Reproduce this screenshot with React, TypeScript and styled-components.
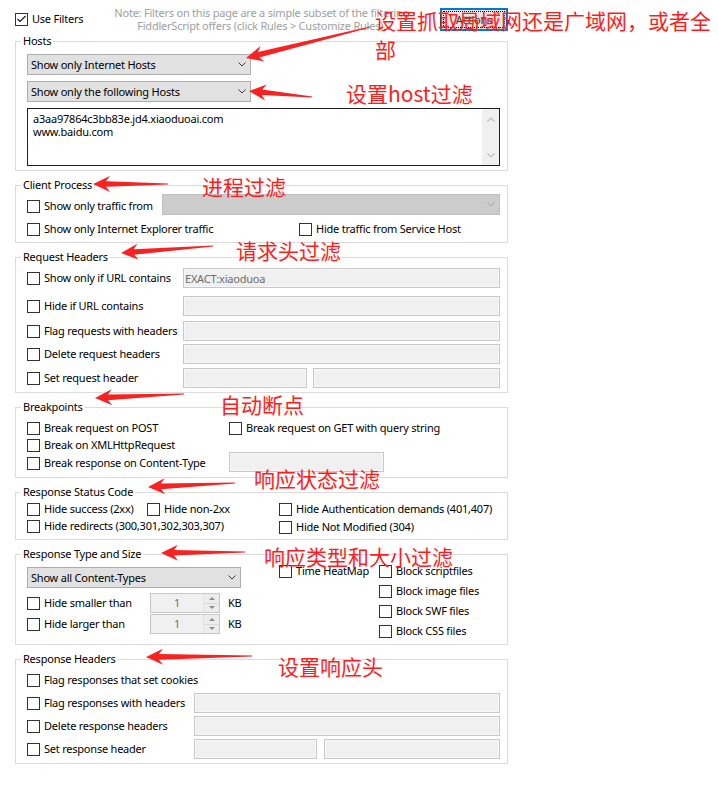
import React from "react";
import styled, { createGlobalStyle } from "styled-components";

const GlobalStyle = createGlobalStyle`
  html, body { margin: 0; padding: 0; background: #ffffff; }
  body { font-family: "Noto Sans", "Liberation Sans", sans-serif; font-size: 11px; color: #000; }
`;

const Page = styled.div`
  position: relative;
  width: 718px;
  height: 785px;
  box-sizing: border-box;
  padding: 8px 0 0 15px;
  overflow: hidden;
  font-family: "Noto Sans", "Liberation Sans", sans-serif;
  font-size: 11px;
  letter-spacing: -0.22px;
  line-height: 13px;
  color: #000;
`;

const TopBar = styled.div`
  width: 493px;
  height: 22px;
  display: flex;
  align-items: center;
  margin-bottom: 11px;
`;

const Hint = styled.div`
  flex: 1;
  align-self: flex-start;
  margin-top: -2px;
  text-align: center;
  white-space: nowrap;
  color: #a0a0a0;
  line-height: 13px;
`;

const ActionButton = styled.div`
  width: 68px;
  height: 23px;
  box-sizing: border-box;
  border: 1px solid #0078d7;
  box-shadow: inset 0 0 0 1px #0078d7;
  background: #e5e5e5;
  padding: 2px;
  display: flex;
`;

const FocusRing = styled.div`
  flex: 1;
  border: 1px dotted #000;
  display: flex;
  align-items: center;
  justify-content: center;
  color: #333;
`;

const Groups = styled.div`
  display: flex;
  flex-direction: column;
  gap: 14px;
`;

const Group = styled.section`
  width: 493px;
  box-sizing: border-box;
  border: 1px solid #dcdcdc;
`;

const Legend = styled.div`
  width: fit-content;
  height: 14px;
  margin: -8px 0 0 5px;
  padding: 0 2px;
  line-height: 14px;
  background: #fff;
  white-space: nowrap;
`;

const Body = styled.div<{ $pt: number; $pb: number; $gap?: number }>`
  padding: ${(p) => p.$pt}px 7px ${(p) => p.$pb}px 11px;
  display: flex;
  flex-direction: column;
  gap: ${(p) => p.$gap ?? 0}px;
`;

const CheckLabel = styled.label<{ $shift?: number }>`
  display: inline-flex;
  align-items: center;
  gap: 4px;
  white-space: nowrap;
  margin-top: ${(p) => p.$shift ?? 0}px;
`;

const CheckText = styled.span`
  padding-bottom: 2px;
`;

const Box = styled.span`
  flex: none;
  width: 13px;
  height: 13px;
  box-sizing: border-box;
  border: 1px solid #333;
  background: #fff;
  display: inline-flex;
  align-items: center;
  justify-content: center;
`;

const Combo = styled.div<{ $w?: number; $disabled?: boolean }>`
  ${(p) => (p.$w ? `width: ${p.$w}px; flex: none;` : "flex: 1;")}
  height: 21px;
  box-sizing: border-box;
  border: 1px solid ${(p) => (p.$disabled ? "#bfbfbf" : "#adadad")};
  background: ${(p) => (p.$disabled ? "#cccccc" : "#e1e1e1")};
  display: flex;
  align-items: center;
  justify-content: space-between;
  padding: 0 4px 0 3px;
  white-space: nowrap;
`;

const Field = styled.div<{ $w?: number }>`
  ${(p) => (p.$w ? `width: ${p.$w}px; flex: none;` : "flex: 1;")}
  height: 20px;
  box-sizing: border-box;
  border: 1px solid #c8c8c8;
  box-shadow: inset 0 0 0 1px #f7f7f7;
  background: #f0f0f0;
  color: #6d6d6d;
  padding-left: 1px;
  display: flex;
  align-items: center;
  white-space: nowrap;
`;

const FieldPair = styled.div<{ $gap: number }>`
  display: flex;
  gap: ${(p) => p.$gap}px;
`;

const FieldRow = styled.div<{ $label: number; $h?: number; $mt?: number }>`
  display: grid;
  grid-template-columns: ${(p) => p.$label}px 1fr;
  align-items: center;
  height: ${(p) => p.$h ?? 20}px;
  margin-top: ${(p) => p.$mt ?? 0}px;
`;

const PlainRow = styled.div<{ $h: number; $mt?: number }>`
  display: flex;
  align-items: center;
  height: ${(p) => p.$h}px;
  margin-top: ${(p) => p.$mt ?? 0}px;
`;

const Grid = styled.div<{ $cols: string; $rows: string }>`
  display: grid;
  grid-template-columns: ${(p) => p.$cols};
  grid-template-rows: ${(p) => p.$rows};
  align-items: center;
`;

const Span = styled.div<{ $col: string; $row?: string; $end?: boolean }>`
  grid-column: ${(p) => p.$col};
  grid-row: ${(p) => p.$row ?? "auto"};
  ${(p) => (p.$end ? "align-self: end; margin-bottom: 1px;" : "")}
`;

const HostList = styled.div`
  height: 58px;
  box-sizing: border-box;
  border: 1px solid #1e1e1e;
  background: #fff;
  display: flex;
`;

const HostText = styled.div`
  flex: 1;
  padding: 3px 5px;
  line-height: 13px;
  white-space: pre;
`;

const ScrollTrack = styled.div`
  width: 17px;
  background: #f0f0f0;
  display: flex;
  flex-direction: column;
  justify-content: space-between;
  align-items: center;
  padding: 8px 0 7px;
`;

const TypeBody = styled.div`
  padding: 0 7px 3px 11px;
  display: flex;
`;

const TypeLeft = styled.div`
  width: 252px;
  flex: none;
  padding-top: 6px;
  display: flex;
  flex-direction: column;
`;

const TypeMid = styled.div`
  width: 100px;
  flex: none;
`;

const TypeRight = styled.div`
  flex: 1;
  display: flex;
  flex-direction: column;
`;

const SpinRow = styled.div<{ $mt: number }>`
  display: grid;
  grid-template-columns: 123px 70px 8px auto;
  align-items: center;
  height: 20px;
  margin-top: ${(p) => p.$mt}px;
`;

const Spin = styled.div`
  grid-column: 2;
  height: 20px;
  box-sizing: border-box;
  border: 1px solid #c8c8c8;
  background: #f0f0f0;
  display: flex;
`;

const SpinValue = styled.span`
  flex: 1;
  text-align: center;
  line-height: 18px;
  color: #6d6d6d;
`;

const SpinButtons = styled.div`
  width: 15px;
  display: flex;
  flex-direction: column;
  border-left: 1px solid #e3e3e3;
`;

const SpinHalf = styled.div<{ $top?: boolean }>`
  flex: 1;
  display: flex;
  align-items: center;
  justify-content: center;
  background: #ececec;
  ${(p) => (p.$top ? "border-bottom: 1px solid #dadada;" : "")}
`;

const Tri = styled.span<{ $dir: "up" | "down" }>`
  width: 0;
  height: 0;
  border-left: 3px solid transparent;
  border-right: 3px solid transparent;
  ${(p) => (p.$dir === "up" ? "border-bottom: 3px solid #8c8c8c;" : "border-top: 3px solid #8c8c8c;")}
`;

const Unit = styled.span`
  grid-column: 4;
  margin-top: -2px;
`;

const Overlay = styled.svg`
  position: absolute;
  left: 0;
  top: 0;
  pointer-events: none;
`;

const Remark = styled.div<{ $x: number; $y: number }>`
  position: absolute;
  left: ${(p) => p.$x}px;
  top: ${(p) => p.$y}px;
  font-family: "Noto Sans CJK SC", "Noto Sans", sans-serif;
  font-size: 21px;
  line-height: 29px;
  letter-spacing: 0;
  color: #ff1c1c;
  white-space: nowrap;
  pointer-events: none;
`;

const Chevron = ({ color = "#3c3c3c" }: { color?: string }) => (
  <svg width="8" height="5" viewBox="0 0 8 5">
    <polyline points="0.5,0.5 4,4 7.5,0.5" fill="none" stroke={color} strokeWidth="1" />
  </svg>
);

const ScrollArrow = ({ up }: { up?: boolean }) => (
  <svg width="8" height="5" viewBox="0 0 8 5">
    <polyline
      points={up ? "0.5,4.5 4,1 7.5,4.5" : "0.5,0.5 4,4 7.5,0.5"}
      fill="none"
      stroke="#c0c0c0"
      strokeWidth="1.2"
    />
  </svg>
);

const Check = ({ label, checked, shift }: { label: string; checked?: boolean; shift?: number }) => (
  <CheckLabel $shift={shift}>
    <Box>
      {checked && (
        <svg width="11" height="11" viewBox="0 0 11 11">
          <polyline points="1.5,5 4,7.5 9.5,2" fill="none" stroke="#1a1a1a" strokeWidth="1.2" />
        </svg>
      )}
    </Box>
    <CheckText>{label}</CheckText>
  </CheckLabel>
);

const Spinner = () => (
  <Spin>
    <SpinValue>1</SpinValue>
    <SpinButtons>
      <SpinHalf $top>
        <Tri $dir="up" />
      </SpinHalf>
      <SpinHalf>
        <Tri $dir="down" />
      </SpinHalf>
    </SpinButtons>
  </Spin>
);

type Arrow = [number, number, number, number];

const ARROWS: Arrow[] = [
  [370, 27, 246, 58],
  [312, 97, 249, 91],
  [168, 184, 93, 184],
  [213, 246, 121, 253],
  [184, 394, 95, 398],
  [235, 483, 148, 487],
  [245, 552, 161, 553],
  [252, 656, 146, 657],
];

function arrowPoints([x1, y1, x2, y2]: Arrow): string {
  const dx = x2 - x1;
  const dy = y2 - y1;
  const len = Math.hypot(dx, dy);
  const ux = dx / len;
  const uy = dy / len;
  const nx = -uy;
  const ny = ux;
  const pt = (a: number, b: number) =>
    `${(x2 - ux * a + nx * b).toFixed(1)},${(y2 - uy * a + ny * b).toFixed(1)}`;
  return [pt(0, 0), pt(17, 8), pt(13, 2.8), pt(len, 0.6), pt(len, -0.6), pt(13, -2.8), pt(17, -8)].join(" ");
}

const REMARKS: { x: number; y: number; text: React.ReactNode }[] = [
  { x: 375, y: 6, text: (<>设置抓取局域网还是广域网，或者全<br />部</>) },
  { x: 346, y: 79, text: "设置host过滤" },
  { x: 202, y: 172, text: "进程过滤" },
  { x: 236, y: 236, text: "请求头过滤" },
  { x: 220, y: 390, text: "自动断点" },
  { x: 254, y: 464, text: "响应状态过滤" },
  { x: 264, y: 542, text: "响应类型和大小过滤" },
  { x: 278, y: 652, text: "设置响应头" },
];

export default function App() {
  return (
    <>
      <GlobalStyle />
      <Page>
        <TopBar>
          <Check label="Use Filters" checked />
          <Hint>
            Note: Filters on this page are a simple subset of the filtering
            <br />
            FiddlerScript offers (click Rules &gt; Customize Rules).
          </Hint>
          <ActionButton>
            <FocusRing>Actions</FocusRing>
          </ActionButton>
        </TopBar>

        <Groups>
          <Group>
            <Legend>Hosts</Legend>
            <Body $pt={6} $pb={4} $gap={6}>
              <Combo $w={224}>
                Show only Internet Hosts
                <Chevron />
              </Combo>
              <Combo $w={224}>
                Show only the following Hosts
                <Chevron />
              </Combo>
              <HostList>
                <HostText>{"a3aa97864c3bb83e.jd4.xiaoduoai.com\nwww.baidu.com"}</HostText>
                <ScrollTrack>
                  <ScrollArrow up />
                  <ScrollArrow />
                </ScrollTrack>
              </HostList>
            </Body>
          </Group>

          <Group>
            <Legend>Client Process</Legend>
            <Body $pt={2} $pb={5}>
              <FieldRow $label={135} $h={21}>
                <Check label="Show only traffic from" shift={3} />
                <Combo $disabled>
                  <span />
                  <Chevron color="#a8a8a8" />
                </Combo>
              </FieldRow>
              <FieldRow $label={272} $h={16} $mt={6}>
                <Check label="Show only Internet Explorer traffic" />
                <Check label="Hide traffic from Service Host" />
              </FieldRow>
            </Body>
          </Group>

          <Group>
            <Legend>Request Headers</Legend>
            <Body $pt={4} $pb={4}>
              <FieldRow $label={156}>
                <Check label="Show only if URL contains" />
                <Field>EXACT:xiaoduoa</Field>
              </FieldRow>
              <FieldRow $label={156} $mt={8}>
                <Check label="Hide if URL contains" />
                <Field />
              </FieldRow>
              <FieldRow $label={156} $mt={5}>
                <Check label="Flag requests with headers" />
                <Field />
              </FieldRow>
              <FieldRow $label={156} $mt={3}>
                <Check label="Delete request headers" />
                <Field />
              </FieldRow>
              <FieldRow $label={156} $mt={4}>
                <Check label="Set request header" />
                <FieldPair $gap={6}>
                  <Field $w={124} />
                  <Field />
                </FieldPair>
              </FieldRow>
            </Body>
          </Group>

          <Group>
            <Legend>Breakpoints</Legend>
            <Body $pt={5} $pb={4}>
              <Grid $cols="202px 1fr" $rows="18px 18px 18px">
                <Check label="Break request on POST" />
                <Check label="Break request on GET with query string" />
                <Span $col="1">
                  <Check label="Break on XMLHttpRequest" />
                </Span>
                <Span $col="2" $row="2 / 4" $end>
                  <Field $w={155} />
                </Span>
                <Span $col="1" $row="3">
                  <Check label="Break response on Content-Type" />
                </Span>
              </Grid>
            </Body>
          </Group>

          <Group>
            <Legend>Response Status Code</Legend>
            <Body $pt={1} $pb={3}>
              <Grid $cols="120px 132px 1fr" $rows="18px 18px">
                <Check label="Hide success (2xx)" />
                <Check label="Hide non-2xx" />
                <Check label="Hide Authentication demands (401,407)" />
                <Span $col="1 / 3">
                  <Check label="Hide redirects (300,301,302,303,307)" />
                </Span>
                <Check label="Hide Not Modified (304)" />
              </Grid>
            </Body>
          </Group>

          <Group>
            <Legend>Response Type and Size</Legend>
            <TypeBody>
              <TypeLeft>
                <Combo $w={214}>
                  Show all Content-Types
                  <Chevron />
                </Combo>
                <SpinRow $mt={5}>
                  <Check label="Hide smaller than" />
                  <Spinner />
                  <Unit>KB</Unit>
                </SpinRow>
                <SpinRow $mt={1}>
                  <Check label="Hide larger than" />
                  <Spinner />
                  <Unit>KB</Unit>
                </SpinRow>
              </TypeLeft>
              <TypeMid>
                <PlainRow $h={20}>
                  <Check label="Time HeatMap" />
                </PlainRow>
              </TypeMid>
              <TypeRight>
                <PlainRow $h={20}>
                  <Check label="Block scriptfiles" />
                </PlainRow>
                <PlainRow $h={20}>
                  <Check label="Block image files" />
                </PlainRow>
                <PlainRow $h={20}>
                  <Check label="Block SWF files" />
                </PlainRow>
                <PlainRow $h={20}>
                  <Check label="Block CSS files" />
                </PlainRow>
              </TypeRight>
            </TypeBody>
          </Group>

          <Group>
            <Legend>Response Headers</Legend>
            <Body $pt={4} $pb={4}>
              <PlainRow $h={20}>
                <Check label="Flag responses that set cookies" />
              </PlainRow>
              <FieldRow $label={167} $mt={3}>
                <Check label="Flag responses with headers" />
                <Field />
              </FieldRow>
              <FieldRow $label={167} $mt={3}>
                <Check label="Delete response headers" />
                <Field />
              </FieldRow>
              <FieldRow $label={167} $mt={3}>
                <Check label="Set response header" />
                <FieldPair $gap={7}>
                  <Field $w={123} />
                  <Field />
                </FieldPair>
              </FieldRow>
            </Body>
          </Group>
        </Groups>

        <Overlay width={718} height={785} viewBox="0 0 718 785">
          {ARROWS.map((a, i) => (
            <polygon key={i} points={arrowPoints(a)} fill="#f72323" />
          ))}
        </Overlay>
        {REMARKS.map((r, i) => (
          <Remark key={i} $x={r.x} $y={r.y}>
            {r.text}
          </Remark>
        ))}
      </Page>
    </>
  );
}
